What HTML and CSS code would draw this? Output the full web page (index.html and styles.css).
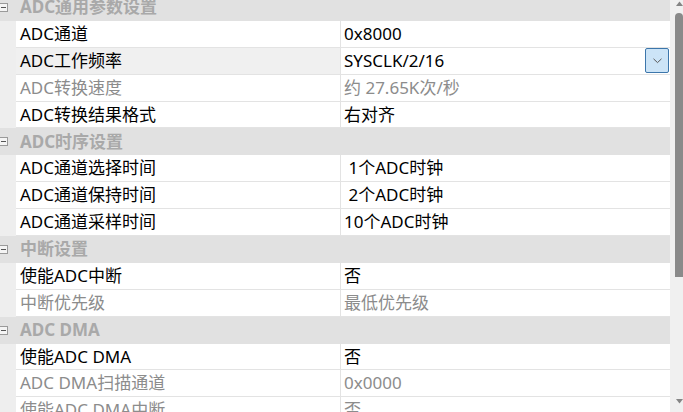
FILE: index.html
```html
<!DOCTYPE html>
<html lang="zh-CN">
<head>
<meta charset="utf-8">
<title>ADC 属性</title>
<link rel="stylesheet" href="styles.css">
</head>
<body>
<div class="frame">
  <div class="table">
    <div class="group"><div class="gutter"><span class="toggle"><span class="minus"></span></span></div><div class="gtitle">ADC通用参数设置</div></div>
    <div class="row"><div class="gutter"></div><div class="cell label">ADC通道</div><div class="cell value">0x8000</div></div>
    <div class="row selected"><div class="gutter"></div><div class="cell label">ADC工作频率</div><div class="cell value"><span class="vtext">SYSCLK/2/16</span><span class="dd"><svg width="9" height="6" viewBox="0 0 9 6"><polyline points="0.5,0.8 4.5,4.6 8.5,0.8" fill="none" stroke="#5a5a5a" stroke-width="1"/></svg></span></div></div>
    <div class="row disabled"><div class="gutter"></div><div class="cell label">ADC转换速度</div><div class="cell value">约 27.65K次/秒</div></div>
    <div class="row"><div class="gutter"></div><div class="cell label">ADC转换结果格式</div><div class="cell value">右对齐</div></div>

    <div class="group"><div class="gutter"><span class="toggle"><span class="minus"></span></span></div><div class="gtitle">ADC时序设置</div></div>
    <div class="row"><div class="gutter"></div><div class="cell label">ADC通道选择时间</div><div class="cell value"> 1个ADC时钟</div></div>
    <div class="row"><div class="gutter"></div><div class="cell label">ADC通道保持时间</div><div class="cell value"> 2个ADC时钟</div></div>
    <div class="row"><div class="gutter"></div><div class="cell label">ADC通道采样时间</div><div class="cell value">10个ADC时钟</div></div>

    <div class="group"><div class="gutter"><span class="toggle"><span class="minus"></span></span></div><div class="gtitle">中断设置</div></div>
    <div class="row"><div class="gutter"></div><div class="cell label">使能ADC中断</div><div class="cell value">否</div></div>
    <div class="row disabled"><div class="gutter"></div><div class="cell label">中断优先级</div><div class="cell value">最低优先级</div></div>

    <div class="group"><div class="gutter"><span class="toggle"><span class="minus"></span></span></div><div class="gtitle">ADC DMA</div></div>
    <div class="row"><div class="gutter"></div><div class="cell label">使能ADC DMA</div><div class="cell value">否</div></div>
    <div class="row disabled"><div class="gutter"></div><div class="cell label">ADC DMA扫描通道</div><div class="cell value">0x0000</div></div>
    <div class="row disabled"><div class="gutter"></div><div class="cell label">使能ADC DMA中断</div><div class="cell value">否</div></div>
  </div>
  <div class="scrollbar">
    <svg class="arrow-up" width="7" height="5" viewBox="0 0 7 5"><polygon points="0,5 3.5,0.5 7,5" fill="#858585"/></svg>
    <div class="thumb"></div>
    <div class="spacer"></div>
    <svg class="arrow-down" width="7" height="5" viewBox="0 0 7 5"><polygon points="0,0 7,0 3.5,4.5" fill="#858585"/></svg>
  </div>
</div>
</body>
</html>
```

FILE: styles.css
```css
html, body {
  margin: 0;
  padding: 0;
}
body {
  width: 683px;
  height: 412px;
  overflow: hidden;
  background: #ffffff;
  font-family: "Noto Sans", "Noto Sans CJK SC", sans-serif;
  font-size: 17px;
  color: #000000;
}
.frame {
  display: flex;
  height: 412px;
}
.table {
  width: 670px;
  flex: none;
  margin-top: -6px;
}
.row, .group {
  display: grid;
  grid-template-columns: 16px 325px 329px;
  height: 26.9px;
}
.gutter {
  background: #eeeeee;
  display: flex;
  align-items: center;
}
.cell {
  box-sizing: border-box;
  border-bottom: 1px solid #e3e3e3;
  display: flex;
  align-items: center;
  white-space: pre;
  overflow: hidden;
  line-height: 1;
  padding-bottom: 1px;
}
.label {
  border-right: 1px solid #e3e3e3;
  padding-left: 4px;
}
.value {
  padding-left: 3px;
}
.selected .label {
  background: #f0f0f0;
}
.disabled .cell {
  color: #8c8c8c;
}
.vtext {
  flex: 1;
}
.dd {
  box-sizing: border-box;
  width: 24px;
  height: 25px;
  margin-right: 1px;
  margin-bottom: -1px;
  background: #cce4f7;
  border: 1px solid #3c76ab;
  border-radius: 2px;
  display: flex;
  align-items: center;
  justify-content: center;
}
.group {
  background: #e1e1e1;
}
.group .gutter {
  background: #e1e1e1;
}
.gtitle {
  grid-column: 2 / 4;
  display: flex;
  align-items: center;
  padding-left: 4px;
  padding-bottom: 1px;
  line-height: 1;
  font-weight: bold;
  color: #a9a9a9;
}
.toggle {
  box-sizing: border-box;
  width: 9px;
  height: 9px;
  margin-left: -1px;
  border: 1px solid #9a9a9a;
  background: #f4f4f4;
  display: flex;
  align-items: center;
  justify-content: center;
}
.minus {
  width: 5px;
  height: 1px;
  background: #555555;
}
.scrollbar {
  width: 13px;
  flex: none;
  background: #f0f0f0;
  display: flex;
  flex-direction: column;
  align-items: flex-end;
}
.arrow-up {
  margin-top: 1px;
  flex: none;
}
.thumb {
  width: 8px;
  height: 264px;
  margin-top: 7px;
  background: #8a8a8a;
  border-radius: 4px 4px 0 0;
  flex: none;
}
.spacer {
  flex: 1;
}
.arrow-down {
  margin-bottom: 8px;
  flex: none;
}
```
